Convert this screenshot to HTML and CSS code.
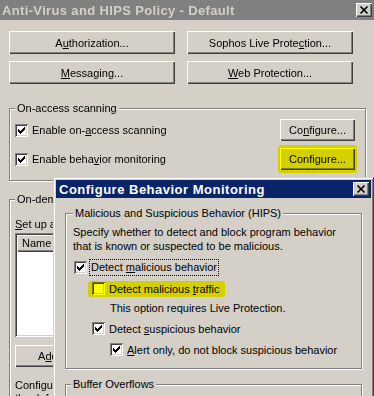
FILE: index.html
```html
<!DOCTYPE html>
<html lang="en">
<head>
    <meta charset="UTF-8">
    <title>Anti-Virus and HIPS Policy - Default</title>
    <link rel="stylesheet" href="styles.css">
</head>
<body>
    <!-- 主窗口 -->
    <div class="window">
        <div class="titlebar inactive">
            <span class="title">Anti-Virus and HIPS Policy - Default</span>
            <span class="close-btn">
                <svg width="16" height="14" viewBox="0 0 16 14"><path d="M4.5 3.5 L11.5 10.5 M11.5 3.5 L4.5 10.5" stroke="#000" stroke-width="1.7"/></svg>
            </span>
        </div>

        <div class="button-grid">
            <button class="btn">A<u>u</u>thorization...</button>
            <button class="btn">Sophos Live Prote<u>c</u>tion...</button>
            <button class="btn"><u>M</u>essaging...</button>
            <button class="btn"><u>W</u>eb Protection...</button>
        </div>

        <fieldset class="group">
            <legend>On-access scanning</legend>
            <div class="option-row">
                <label class="check"><span class="checkbox checked"></span><span class="label">Enable on-<u>a</u>ccess scanning</span></label>
                <button class="btn small">Co<u>n</u>figure...</button>
            </div>
            <div class="option-row">
                <label class="check"><span class="checkbox checked"></span><span class="label">Enable beha<u>v</u>ior monitoring</span></label>
                <span class="marked"><button class="btn small">Confi<u>g</u>ure...</button></span>
            </div>
        </fieldset>

        <fieldset class="group on-demand">
            <legend>On-demand scanning</legend>
            <p class="line"><u>S</u>et up and manage scans:</p>
            <div class="list-box">
                <div class="list-header"><span class="col-head">Name</span></div>
            </div>
            <button class="btn add-btn">A<u>d</u>d...</button>
            <p class="line note">Configure extensions and exclusions for</p>
            <p class="line">the default scan settings.</p>
        </fieldset>
    </div>

    <!-- 配置行为监控对话框 -->
    <div class="dialog">
        <div class="titlebar active">
            <span class="title">Configure Behavior Monitoring</span>
            <span class="close-btn">
                <svg width="16" height="14" viewBox="0 0 16 14"><path d="M4.5 3.5 L11.5 10.5 M11.5 3.5 L4.5 10.5" stroke="#000" stroke-width="1.7"/></svg>
            </span>
        </div>

        <fieldset class="group hips">
            <legend>Malicious and Suspicious Behavior (HIPS)</legend>
            <p class="desc">Specify whether to detect and block program behavior<br>that is known or suspected to be malicious.</p>
            <div class="hips-row level-0">
                <span class="checkbox checked"></span>
                <span class="focus-label">Detect <u>m</u>alicious behavior</span>
            </div>
            <div class="hips-row level-1">
                <span class="marked row-mark"><span class="checkbox"></span><span class="label">Detect malicious <u>t</u>raffic</span></span>
            </div>
            <div class="hips-note">This option requires Live Protection.</div>
            <div class="hips-row level-1b">
                <span class="checkbox checked"></span><span class="label">Detect <u>s</u>uspicious behavior</span>
            </div>
            <div class="hips-row level-2">
                <span class="checkbox checked"></span><span class="label"><u>A</u>lert only, do not block suspicious behavior</span>
            </div>
        </fieldset>

        <fieldset class="group buffer">
            <legend>Buffer Overflows</legend>
        </fieldset>
    </div>
</body>
</html>
```

FILE: styles.css
```css
/* 基础重置 */
* {
    margin: 0;
    padding: 0;
    box-sizing: border-box;
}

body {
    width: 374px;
    height: 396px;
    overflow: hidden;
    position: relative;
    background-color: #d4d0c8;
    font-family: "Liberation Sans", Arial, sans-serif;
    font-size: 11px;
    color: #000;
}

/* 标题栏 */
.titlebar {
    height: 20px;
    display: flex;
    align-items: center;
    justify-content: space-between;
    padding: 0 2px;
    font-weight: bold;
    font-size: 13px;
    letter-spacing: 0.35px;
}

.titlebar.inactive {
    background-color: #808080;
    color: #d4d0c8;
}

.titlebar.active {
    background-color: #0a246a;
    color: #fff;
    height: 18px;
    padding: 0 2px 0 3px;
    letter-spacing: 0.5px;
}

.close-btn {
    width: 16px;
    height: 14px;
    display: block;
    background-color: #d4d0c8;
    box-shadow: inset 1px 1px #fff, inset -1px -1px #404040, inset -2px -2px #808080;
}

.close-btn svg {
    display: block;
}

/* 按钮 */
.btn {
    height: 23px;
    font-family: inherit;
    font-size: 11px;
    color: #000;
    background-color: #d4d0c8;
    border: none;
    box-shadow: inset 1px 1px #fff, inset -1px -1px #404040, inset -2px -2px #808080;
}

.btn.small {
    width: 75px;
    height: 22px;
}

.button-grid {
    display: grid;
    grid-template-columns: 166px 166px;
    column-gap: 12px;
    row-gap: 7px;
    margin: 11px 0 0 9px;
}

/* 分组框 */
.group {
    border: 1px solid #808080;
    box-shadow: inset 1px 1px #fff, 1px 1px #fff;
    margin: 18px 0 0 9px;
    width: 357px;
    padding: 4px 10px 10px 5px;
    min-width: 0;
}

.group legend {
    padding: 0 2px;
    line-height: 13px;
    background-color: #d4d0c8;
}

.option-row {
    display: flex;
    align-items: center;
    justify-content: space-between;
    height: 22px;
}

.option-row + .option-row {
    margin-top: 7px;
}

.check {
    display: flex;
    align-items: center;
    gap: 4px;
}

/* 复选框 */
.checkbox {
    width: 13px;
    height: 13px;
    flex: none;
    display: block;
    background-color: #fff;
    box-shadow: inset 1px 1px #808080, inset -1px -1px #fff, inset 2px 2px #404040, inset -2px -2px #d4d0c8;
}

.checkbox.checked {
    background-image: url("data:image/svg+xml,%3Csvg xmlns='http://www.w3.org/2000/svg' width='13' height='13' viewBox='0 0 13 13'%3E%3Cpath d='M3 5 L5 7 L10 2 L10 5 L5 10 L3 8 Z' fill='%23000' shape-rendering='crispEdges'/%3E%3C/svg%3E");
    background-repeat: no-repeat;
}

/* 荧光笔标记 */
.marked {
    position: relative;
    display: inline-flex;
}

.marked::after {
    content: "";
    position: absolute;
    inset: -3px -2px;
    background-color: #ffff00;
    mix-blend-mode: multiply;
    border-radius: 3px;
}

/* 按需扫描 */
.on-demand {
    margin-top: 12px;
    padding: 12px 10px 10px 5px;
}

.line {
    line-height: 13px;
}

.list-box {
    margin-top: 2px;
    height: 104px;
    width: 340px;
    background-color: #fff;
    padding: 2px;
    box-shadow: inset 1px 1px #808080, inset -1px -1px #fff, inset 2px 2px #404040, inset -2px -2px #d4d0c8;
}

.list-header {
    height: 17px;
    display: flex;
    background-color: #d4d0c8;
}

.col-head {
    width: 120px;
    padding: 2px 5px;
    line-height: 13px;
    box-shadow: inset 1px 1px #fff, inset -1px -1px #404040, inset -2px -2px #808080;
}

.add-btn {
    margin-top: 8px;
    width: 75px;
    height: 22px;
}

.line.note {
    margin-top: 12px;
}

/* 对话框 */
.dialog {
    position: absolute;
    left: 53px;
    top: 177px;
    width: 321px;
    height: 240px;
    background-color: #d4d0c8;
    border: 1px solid;
    border-color: #d4d0c8 #404040 #404040 #d4d0c8;
    box-shadow: inset 1px 1px #fff, inset -1px -1px #808080;
    padding: 2px;
}

.hips {
    margin: 9px 0 0 9px;
    width: 297px;
    padding: 5px 8px 8px 7px;
}

.desc {
    line-height: 14px;
    margin-bottom: 4px;
}

.hips-row {
    height: 21px;
    display: flex;
    align-items: center;
}

.hips-row .label {
    margin-left: 4px;
}

.level-0 {
    padding-left: 1px;
}

.focus-label {
    margin-left: 2px;
    padding: 1px;
    line-height: 13px;
    border: 1px dotted #000;
}

.level-1 {
    padding-left: 19px;
}

.row-mark {
    align-items: center;
}

.row-mark::after {
    inset: -1px -6px -2px -4px;
}

.hips-note {
    height: 19px;
    line-height: 19px;
    padding-left: 37px;
}

.level-1b {
    padding-left: 19px;
}

.level-2 {
    padding-left: 37px;
}

.buffer {
    margin: 9px 0 0 9px;
    width: 297px;
    height: 40px;
}
```
